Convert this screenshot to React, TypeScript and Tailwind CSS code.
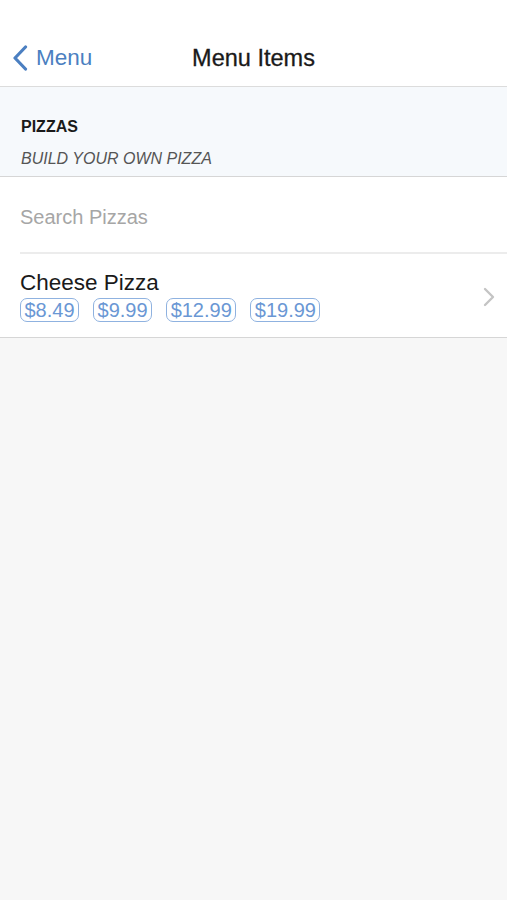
const PRICES = ["$8.49", "$9.99", "$12.99", "$19.99"];

export default function App() {
  return (
    <div className="flex min-h-[900px] flex-col bg-[#f7f7f7] font-['Liberation_Sans',Arial,sans-serif]">
      {/* nav bar */}
      <div className="relative flex h-[87px] items-center justify-center border-b border-[#dcdcdc] bg-white pt-[32px]">
        <div className="absolute left-[12px] top-[45px] flex items-center gap-[8px] text-[#4b7fc1]">
          <svg width="16" height="26" viewBox="0 0 16 26" fill="none">
            <path d="M13.5 2 L3 13 L13.5 24" stroke="currentColor" strokeWidth="3.2" strokeLinecap="round" strokeLinejoin="round" />
          </svg>
          <span className="text-[22.5px] leading-none">Menu</span>
        </div>
        <span className="text-[23.5px] leading-none text-[#1a1a1a] [-webkit-text-stroke:0.3px_#1a1a1a]">Menu Items</span>
      </div>

      {/* section header */}
      <div className="flex h-[90px] flex-col border-b border-[#d6d6d6] bg-[#f6f9fc] px-[21px] pt-[32px]">
        <span className="text-[16px] font-bold leading-none text-[#1a1a1a]">PIZZAS</span>
        <span className="mt-[16px] text-[16px] italic leading-none text-[#555]">BUILD YOUR OWN PIZZA</span>
      </div>

      {/* search + list */}
      <div className="border-b border-[#d6d6d6] bg-white">
        <div className="flex h-[75px] items-center px-[20px] pt-[4px]">
          <span className="text-[20px] text-[#a6a6a6]">Search Pizzas</span>
        </div>
        <div className="ml-[20px] h-[2px] bg-[#ececec]" />
        <div className="flex h-[83px] items-center pl-[20px] pr-[12px] pt-[3px]">
          <div className="flex flex-1 flex-col">
            <span className="text-[22.5px] leading-none text-[#1a1a1a]">Cheese Pizza</span>
            <div className="mt-[4px] flex gap-[14px]">
              {PRICES.map((p) => (
                <span
                  key={p}
                  className="rounded-[7px] border-[1.5px] border-[#8fb2e0] px-[3.5px] text-[20px] leading-[22px] text-[#6a97d4]"
                >
                  {p}
                </span>
              ))}
            </div>
          </div>
          <svg width="12" height="20" viewBox="0 0 12 20" fill="none">
            <path d="M2 2 L10 10 L2 18" stroke="#c4c4c4" strokeWidth="2.4" strokeLinecap="round" strokeLinejoin="round" />
          </svg>
        </div>
      </div>
    </div>
  );
}
